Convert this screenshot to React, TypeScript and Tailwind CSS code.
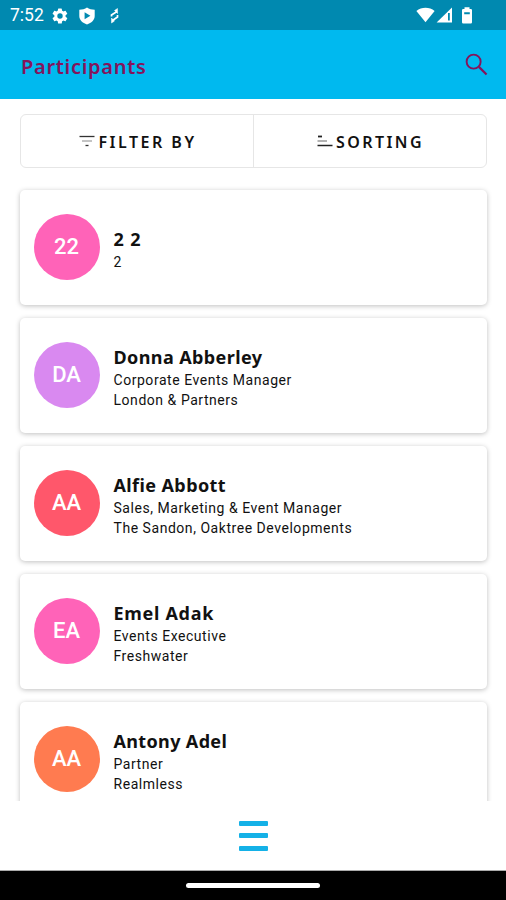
import React from 'react';

interface Participant {
  id: string;
  initials: string;
  name: string;
  lines: string[];
  color: string;
  nameSpacing: string;
}

const participants: Participant[] = [
  { id: '1', initials: '22', name: '2 2', lines: ['2'], color: 'bg-[#ff63b8]', nameSpacing: 'tracking-[0.9px]' },
  {
    id: '2',
    initials: 'DA',
    name: 'Donna Abberley',
    lines: ['Corporate Events Manager', 'London & Partners'],
    color: 'bg-[#d989f0]',
    nameSpacing: 'tracking-[0.4px]'
  },
  {
    id: '3',
    initials: 'AA',
    name: 'Alfie Abbott',
    lines: ['Sales, Marketing & Event Manager', 'The Sandon, Oaktree Developments'],
    color: 'bg-[#ff576b]',
    nameSpacing: 'tracking-[0.4px]'
  },
  {
    id: '4',
    initials: 'EA',
    name: 'Emel Adak',
    lines: ['Events Executive', 'Freshwater'],
    color: 'bg-[#ff63b8]',
    nameSpacing: 'tracking-[0.7px]'
  },
  {
    id: '5',
    initials: 'AA',
    name: 'Antony Adel',
    lines: ['Partner', 'Realmless'],
    color: 'bg-[#ff7b50]',
    nameSpacing: 'tracking-[0.35px]'
  }
];

function StatusBar() {
  return (
    <div className="flex h-[30px] shrink-0 items-center bg-[#0089b0] pl-[10px] pr-[33px] pt-px text-white">
      <span className="w-[41px] pt-px font-['Roboto',sans-serif] text-[17.5px] leading-none">7:52</span>
      <svg className="h-[18px] w-[18px] shrink-0" viewBox="0 0 24 24" fill="currentColor">
        <path d="M19.4 13a7.5 7.5 0 0 0 0-2l2.1-1.6a.5.5 0 0 0 .1-.7l-2-3.4a.5.5 0 0 0-.6-.2l-2.5 1a7.3 7.3 0 0 0-1.7-1l-.4-2.6a.5.5 0 0 0-.5-.5h-4a.5.5 0 0 0-.5.5L9 5.1a7.3 7.3 0 0 0-1.7 1l-2.5-1a.5.5 0 0 0-.6.2l-2 3.4a.5.5 0 0 0 .1.7L4.5 11a7.5 7.5 0 0 0 0 2l-2.2 1.6a.5.5 0 0 0-.1.7l2 3.4c.1.2.4.3.6.2l2.5-1c.5.4 1.1.7 1.7 1l.4 2.6c0 .3.2.5.5.5h4c.3 0 .5-.2.5-.5l.4-2.6a7.3 7.3 0 0 0 1.7-1l2.5 1c.2.1.5 0 .6-.2l2-3.4a.5.5 0 0 0-.1-.7zM12 15.6a3.6 3.6 0 1 1 0-7.2 3.6 3.6 0 0 1 0 7.2z" />
      </svg>
      <svg className="ml-[9px] h-[18px] w-[18px] shrink-0" viewBox="0 0 18 18" fill="currentColor" fillRule="evenodd">
        <path d="M9 .6C7 2 4 2.8 1.3 2.8V9c0 3.9 3.2 7 7.7 8.4 4.5-1.4 7.7-4.5 7.7-8.4V2.8C14 2.8 11 2 9 .6zM6.6 5.3v7L12.4 8.8z" />
      </svg>
      {/* Two opposed bent arrows */}
      <svg className="ml-[12px] h-4 w-[14px] shrink-0" viewBox="0 0 14 16" fill="none" stroke="currentColor" strokeWidth="1.7">
        <path d="M3.500 8.500V7L9 3.500" />
        <path d="M6.500 2.500L9.500.5v5z" fill="currentColor" strokeWidth="0.5" />
        <path d="M9.500 7v2L4.500 12.500" />
        <path d="M3.500 10v5l3-2z" fill="currentColor" strokeWidth="0.5" />
      </svg>
      <div className="mb-px ml-auto flex items-center">
        <svg className="h-4 w-[19px]" viewBox="0 0 19 16" fill="currentColor">
          <path d="M9.5 15.2L.4 4C5.5-.2 13.5-.2 18.6 4z" />
        </svg>
        <svg className="ml-px h-4 w-[17px]" viewBox="0 0 17 16" fill="currentColor">
          <path d="M.6 15.5L16 .5v15z" />
          <path d="M12 6h1.800v7.500h-1.800z" fill="#0089b0" />
        </svg>
        <svg className="ml-[8px] h-[17px] w-3" viewBox="0 0 12 17" fill="currentColor" fillRule="evenodd">
          <path d="M3.5.3h5v1.6h1.3q1.2 0 1.2 1.2v12.2q0 1.2-1.2 1.2H2.2Q1 16.5 1 15.3V3.1q0-1.2 1.2-1.2h1.3zM3.2 5.2v2h5.6v-2z" />
        </svg>
      </div>
    </div>
  );
}

function ParticipantCard({ participant }: { participant: Participant }) {
  return (
    <div className="flex h-[115px] shrink-0 items-center rounded-[5px] bg-white pl-[14px] shadow-[0_1px_5px_rgba(0,0,0,0.25)]">
      <div
        className={`mb-px flex h-[66px] w-[66px] shrink-0 items-center justify-center rounded-full pb-px font-['Roboto',sans-serif] text-[22px] font-medium text-white ${participant.color}`}
      >
        {participant.initials}
      </div>
      <div className="ml-[14px] flex flex-col pt-[3px]">
        <h2 className={`font-['Noto_Sans',sans-serif] text-[18px] font-bold leading-[26px] text-[#111] ${participant.nameSpacing}`}>
          {participant.name}
        </h2>
        {participant.lines.map((line) => (
          <p key={line} className="font-['Roboto',sans-serif] text-[14px] leading-5 tracking-[0.54px] text-[#111]">
            {line}
          </p>
        ))}
      </div>
    </div>
  );
}

export default function App() {
  return (
    <div className="flex h-[900px] w-[506px] flex-col overflow-hidden bg-white">
      <StatusBar />

      {/* App bar */}
      <header className="flex h-[69px] shrink-0 items-center justify-between bg-[#00b9ef] pl-[21px] pr-[18px]">
        <h1 className="pt-1 font-['Noto_Sans',sans-serif] text-[20px] font-semibold leading-7 tracking-[0.7px] text-[#84145c]">
          Participants
        </h1>
        <svg className="h-[23px] w-[23px]" viewBox="0 0 24 24" fill="none" stroke="#84145c" strokeWidth="2">
          <circle cx="9" cy="9" r="7.3" />
          <path d="M14.500 14.500L22.500 22.500" strokeWidth="2.300" />
        </svg>
      </header>

      <main className="flex min-h-0 flex-1 flex-col overflow-hidden px-[19.5px] pt-[15px]">
        {/* Filter and sorting */}
        <div className="flex h-[54px] shrink-0 rounded-[6px] border-[1.5px] border-[#e6e6e6] font-['Noto_Sans',sans-serif] text-[16px] font-semibold text-[#111]">
          <button className="flex w-[233px] items-center justify-center gap-[3px] border-r border-[#e6e6e6] pl-[3px] tracking-[2.5px]">
            <svg className="h-3 w-4" viewBox="0 0 16 12" fill="none" stroke="#333">
              <path d="M.5 1.500h15" strokeWidth="1.300" />
              <path d="M3 6h10" stroke="#888" />
              <path d="M6.500 10.500h3" strokeWidth="1.300" />
            </svg>
            <span className="pt-[2px]">FILTER BY</span>
          </button>
          <button className="flex flex-1 items-center justify-center gap-[3px] pl-[2px] tracking-[2.4px]">
            <svg className="h-3 w-4" viewBox="0 0 16 12" fill="none" stroke="#222">
              <path d="M1 1.500h4" strokeWidth="1.800" />
              <path d="M.5 6h9.500" stroke="#888" strokeWidth="1.300" />
              <path d="M.5 10.500h15" strokeWidth="1.500" />
            </svg>
            <span className="pt-[2px]">SORTING</span>
          </button>
        </div>

        <div className="flex flex-col gap-[13px] pt-[22px]">
          {participants.map((participant) => (
            <ParticipantCard key={participant.id} participant={participant} />
          ))}
        </div>
      </main>

      {/* Bottom menu */}
      <nav className="flex h-[70px] shrink-0 items-center justify-center border-b border-[#aaa] bg-white">
        <button className="flex h-[30px] flex-col justify-between">
          <span className="h-[5px] w-[29px] rounded-[1px] bg-[#14b1e7]" />
          <span className="h-[5px] w-[29px] rounded-[1px] bg-[#14b1e7]" />
          <span className="h-[5px] w-[29px] rounded-[1px] bg-[#14b1e7]" />
        </button>
      </nav>
      <div className="flex h-[29px] shrink-0 items-center justify-center bg-black">
        <div className="h-[5px] w-[134px] rounded-full bg-white" />
      </div>
    </div>
  );
}
